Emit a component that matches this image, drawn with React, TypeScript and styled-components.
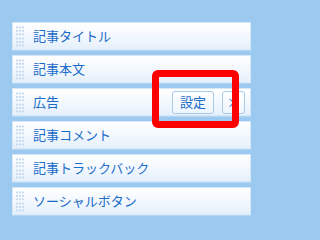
import React from "react";
import styled, { createGlobalStyle } from "styled-components";

const GlobalStyle = createGlobalStyle`
  html, body {
    margin: 0;
    padding: 0;
    background: #9bc9ef;
  }
  body {
    font-family: "Noto Sans CJK JP", "Noto Sans", sans-serif;
  }
`;

const Page = styled.div`
  position: relative;
  width: 263px;
  height: 233px;
  padding: 22px 0 0 12px;
  box-sizing: border-box;
`;

const WidgetList = styled.ul`
  list-style: none;
  margin: 0;
  padding: 0;
  width: 239px;
  display: flex;
  flex-direction: column;
  gap: 5px;
`;

const WidgetRow = styled.li`
  height: 28px;
  box-sizing: border-box;
  display: flex;
  align-items: center;
  padding: 0 5px 0 3px;
  border: 1px solid #d6e8f8;
  background: linear-gradient(to bottom, #ffffff 0%, #f3f8fe 50%, #e5f0fb 100%);
  box-shadow: 0 1px 0 #b5d6f3;
`;

const Handle = styled.svg`
  flex: none;
  width: 8px;
  height: 24px;
  margin-right: 9px;
`;

const Label = styled.span`
  flex: 1;
  font-size: 13px;
  line-height: 18px;
  color: #1a6cc8;
  white-space: nowrap;
`;

const SmallButton = styled.button<{ $wide?: boolean }>`
  flex: none;
  height: 23px;
  width: ${(p) => (p.$wide ? "42px" : "23px")};
  margin-left: ${(p) => (p.$wide ? "0" : "8px")};
  padding: 0;
  box-sizing: border-box;
  border: 1px solid #abc9e8;
  border-radius: 3px;
  background: linear-gradient(to bottom, #ffffff, #edf5fd);
  font-family: "Noto Sans CJK JP", "Noto Sans", sans-serif;
  font-size: 13px;
  line-height: 18px;
  color: #1a6cc8;
  display: flex;
  align-items: center;
  justify-content: center;
`;

const Highlight = styled.div`
  position: absolute;
  left: 152px;
  top: 70px;
  width: 87px;
  height: 58px;
  box-sizing: border-box;
  border: 7px solid #ff0000;
  border-radius: 6px;
  pointer-events: none;
`;

function DragHandle() {
  const cols = [0, 3, 6];
  const rows = [3, 7, 11, 16, 20, 24];
  return (
    <Handle viewBox="0 0 8 28" preserveAspectRatio="none">
      {rows.map((y) =>
        cols.map((x) => (
          <rect key={`${x}-${y}`} x={x} y={y} width="2" height="2" fill="#c5d8ee" />
        ))
      )}
    </Handle>
  );
}

const widgets = [
  { name: "記事タイトル" },
  { name: "記事本文" },
  { name: "広告", active: true },
  { name: "記事コメント" },
  { name: "記事トラックバック" },
  { name: "ソーシャルボタン" },
];

export default function App() {
  return (
    <>
      <GlobalStyle />
      <Page>
        <WidgetList>
          {widgets.map((w) => (
            <WidgetRow key={w.name}>
              <DragHandle />
              <Label>{w.name}</Label>
              {w.active && (
                <>
                  <SmallButton $wide>設定</SmallButton>
                  <SmallButton>×</SmallButton>
                </>
              )}
            </WidgetRow>
          ))}
        </WidgetList>
        <Highlight />
      </Page>
    </>
  );
}
